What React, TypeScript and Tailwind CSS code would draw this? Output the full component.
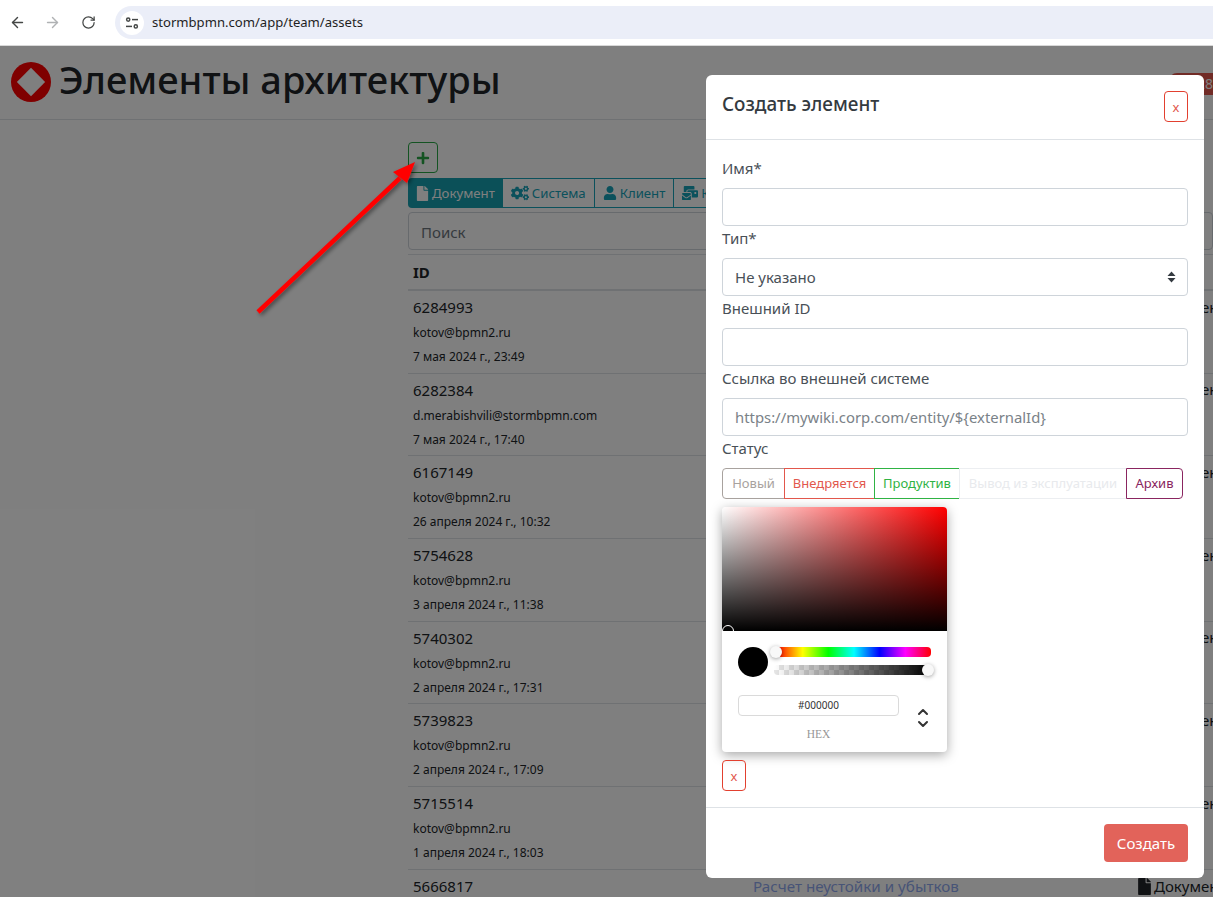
import { ArrowLeft, ArrowRight, RotateCw, ChevronUp, ChevronDown } from "lucide-react";
import { FaFile, FaCogs, FaUser, FaMailBulk, FaPlus } from "react-icons/fa";

const rows = [
  { id: "6284993", user: "kotov@bpmn2.ru", date: "7 мая 2024 г., 23:49" },
  { id: "6282384", user: "d.merabishvili@stormbpmn.com", date: "7 мая 2024 г., 17:40" },
  { id: "6167149", user: "kotov@bpmn2.ru", date: "26 апреля 2024 г., 10:32" },
  { id: "5754628", user: "kotov@bpmn2.ru", date: "3 апреля 2024 г., 11:38" },
  { id: "5740302", user: "kotov@bpmn2.ru", date: "2 апреля 2024 г., 17:31" },
  { id: "5739823", user: "kotov@bpmn2.ru", date: "2 апреля 2024 г., 17:09" },
  { id: "5715514", user: "kotov@bpmn2.ru", date: "1 апреля 2024 г., 18:03" },
];

function BrowserBar() {
  return (
    <div className="flex h-[46px] shrink-0 items-start border-b border-[#d8d8d8] bg-white">
      <div className="flex h-[45px] items-center">
        <ArrowLeft size={17} strokeWidth={2} className="ml-[9px] text-[#444746]" />
        <ArrowRight size={17} strokeWidth={2} className="ml-[18px] text-[#b0b2b4]" />
        <RotateCw size={15} strokeWidth={2} className="ml-[20px] text-[#444746]" />
      </div>
      <div className="ml-[19px] mt-[6px] flex h-[33px] flex-1 items-center rounded-l-full bg-[#ebeef8] pl-[5px]">
        <div className="flex h-[24px] w-[24px] items-center justify-center rounded-full bg-white">
          <svg width="14" height="14" viewBox="0 0 14 14" fill="none" stroke="#444746" strokeWidth="1.5">
            <circle cx="3.2" cy="3.6" r="1.6" />
            <path d="M7 3.6h6" />
            <path d="M1 10.4h6" />
            <circle cx="10.8" cy="10.4" r="1.6" />
          </svg>
        </div>
        <span className="ml-[8px] text-[13.1px] text-[#1f1f1f]">stormbpmn.com/app/team/assets</span>
      </div>
    </div>
  );
}

function Tab({ icon, label, active }: { icon: React.ReactNode; label: string; active?: boolean }) {
  return (
    <div
      className={
        active
          ? "flex h-[30px] items-center gap-[3px] rounded-l bg-[#16a0b0] px-[8px] text-white"
          : "flex h-[30px] items-center gap-[3px] border border-l-0 border-[#17a2b8] px-[8px] text-[#17a2b8]"
      }
    >
      {icon}
      <span className="mt-[1px] text-[13.2px]">{label}</span>
    </div>
  );
}

function DocType() {
  return (
    <span className="flex h-[24px] items-center gap-[3px] text-[15px] text-[#212529]">
      <FaFile className="h-[17px] w-[13px]" />
      Документ
    </span>
  );
}

function AssetRow({ id, user, date }: { id: string; user: string; date: string }) {
  return (
    <div className="grid h-[82.67px] grid-cols-[340px_385px_1fr] border-b border-[#dee2e6] pl-[5px] pt-[4px] text-[#212529]">
      <div className="flex flex-col">
        <span className="h-[26px] text-[15px] leading-[24px]">{id}</span>
        <span className="h-[24px] text-[12px] leading-[24px]">{user}</span>
        <span className="h-[24px] text-[12px] leading-[24px]">{date}</span>
      </div>
      <span />
      <DocType />
    </div>
  );
}

function Page() {
  return (
    <div className="flex-1 overflow-hidden bg-white">
      <div className="flex h-[74px] items-start justify-between border-b border-[#dee2e6] pl-[11px]">
        <div className="flex items-start gap-[8px] pt-[16px]">
          <div className="flex h-[40px] w-[40px] items-center justify-center rounded-full bg-[#ff0000]">
            <div className="h-[20px] w-[20px] rotate-45 bg-white" />
          </div>
          <h1 className="-mt-[3px] text-[38px] leading-[40px] font-medium text-[#212529]">Элементы архитектуры</h1>
        </div>
        <span className="mt-[27px] rounded-l-lg bg-[#e2574c] pl-[28px] text-[14px] leading-[22px] text-white">
          28
        </span>
      </div>
      <div className="pl-[408px] pt-[22px]">
        <div className="flex h-[31px] w-[30px] items-center justify-center rounded border border-[#28a745] text-[#28a745]">
          <FaPlus size={14} />
        </div>
        <div className="mt-[5px] flex">
          <Tab active icon={<FaFile className="h-[15px] w-[13px]" />} label="Документ" />
          <Tab icon={<FaCogs size={18} />} label="Система" />
          <Tab icon={<FaUser size={14} />} label="Клиент" />
          <Tab icon={<FaMailBulk size={16} />} label="Контрагент" />
        </div>
        <div className="mt-[4px] flex h-[38px] items-center rounded border border-[#ced4da] px-[12px] pt-[2px] text-[15px] text-[#6c757d]">
          Поиск
        </div>
        <div className="mt-[4px] h-[37px] border-t border-b-2 border-[#dee2e6] pl-[5px] text-[15px] leading-[35px] font-bold text-[#212529]">
          ID
        </div>
        {rows.map((r) => (
          <AssetRow key={r.id} {...r} />
        ))}
        <div className="grid grid-cols-[340px_385px_1fr] pl-[5px] pt-[5px] text-[15px] text-[#212529]">
          <span>5666817</span>
          <span className="text-[15.2px] text-[#8fa8ee]">Расчет неустойки и убытков</span>
          <DocType />
        </div>
      </div>
    </div>
  );
}

function Field({ label, children }: { label: string; children: React.ReactNode }) {
  return (
    <div>
      <div className="mb-2 text-[15px] leading-[24px] text-[#495057]">{label}</div>
      {children}
    </div>
  );
}

function Input({ text, placeholder }: { text?: string; placeholder?: string }) {
  return (
    <div className="flex h-[38px] items-center rounded border border-[#ced4da] px-[12px] text-[15px] text-[#495057]">
      {text}
      {placeholder && <span className="text-[14.85px] text-[#7a8288]">{placeholder}</span>}
    </div>
  );
}

function ColorPicker() {
  return (
    <div className="mt-2 h-[245px] w-[225px] rounded-sm bg-white shadow-[0_3px_12px_rgba(0,0,0,0.35)]">
      <div className="relative h-[124px] overflow-hidden rounded-t-sm bg-[linear-gradient(to_top,#000,transparent),linear-gradient(to_right,#fff,#f00)]">
        <div className="absolute bottom-[-6px] left-0 h-[12px] w-[12px] rounded-full border border-white" />
      </div>
      <div className="px-[16px] pt-[16px]">
        <div className="flex gap-[6px]">
          <div className="h-[30px] w-[30px] rounded-full bg-black" />
          <div className="flex-1">
            <div className="relative ml-[3px] h-[10px] rounded-sm bg-[linear-gradient(to_right,#f00,#ff0,#0f0,#0ff,#00f,#f0f,#f00)]">
              <div className="absolute left-[-7px] top-[-1px] h-[12px] w-[12px] rounded-full bg-[#f8f8f8] shadow-[0_1px_4px_rgba(0,0,0,0.37)]" />
            </div>
            <div className="relative mt-[8px] h-[10px] rounded-sm bg-[linear-gradient(to_right,transparent,#000),repeating-conic-gradient(#e6e6e6_0_25%,#fff_0_50%)] bg-[length:100%_100%,10px_10px]">
              <div className="absolute right-[-3px] top-[-1px] h-[12px] w-[12px] rounded-full bg-[#f8f8f8] shadow-[0_1px_4px_rgba(0,0,0,0.37)]" />
            </div>
          </div>
        </div>
        <div className="mt-[18px] flex">
          <div className="w-[161px]">
            <div className="flex h-[21px] items-center justify-center rounded-sm border border-[#dadada] text-[10px] text-[#333]">
              #000000
            </div>
            <div className="mt-[10px] text-center font-['Liberation_Serif',serif] text-[11.5px] text-[#969696]">HEX</div>
          </div>
          <div className="ml-[16px] mt-[9px] flex flex-col text-[#333]">
            <ChevronUp size={16} strokeWidth={3} className="-mb-[4px]" />
            <ChevronDown size={16} strokeWidth={3} />
          </div>
        </div>
      </div>
    </div>
  );
}

function CloseButton() {
  return (
    <div className="flex h-[31px] w-[24px] items-center justify-center rounded-sm border border-[#e2402f] pt-[2px] text-[13px] text-[#e2574c]">
      x
    </div>
  );
}

function Modal() {
  const statusBase = "-ml-px flex h-[31px] items-center justify-center border text-[13px]";
  return (
    <div className="absolute left-[706px] top-[75px] w-[498px] rounded-md bg-white">
      <div className="flex h-[65px] items-start justify-between border-b border-[#dee2e6] px-[16px] pt-[16px]">
        <h2 className="text-[18.9px] leading-[27px] font-medium text-[#343a40]">Создать элемент</h2>
        <CloseButton />
      </div>
      <div className="px-[16px] pb-[16px] pt-[16px]">
        <Field label="Имя*">
          <Input />
        </Field>
        <Field label="Тип*">
          <div className="relative">
            <Input text="Не указано" />
            <svg className="absolute right-[12px] top-[13px]" width="9" height="12" viewBox="0 0 9 12" fill="#343a40">
              <path d="M4.5 0.5 8.5 5H0.5z" />
              <path d="M4.5 11.5 0.5 7h8z" />
            </svg>
          </div>
        </Field>
        <Field label="Внешний ID">
          <Input />
        </Field>
        <Field label="Ссылка во внешней системе">
          <Input placeholder="https://mywiki.corp.com/entity/${externalId}" />
        </Field>
        <div className="text-[15px] leading-[24px] text-[#495057]">Статус</div>
        <div className="mt-2 flex pl-px">
          <div className={`${statusBase} w-[63px] rounded-l border-[#a8a29e] text-[#a8a29e]`}>Новый</div>
          <div className={`${statusBase} w-[91px] border-[#e2574c] text-[#e2574c]`}>Внедряется</div>
          <div className={`${statusBase} w-[86px] border-[#2fb344] text-[#2fb344]`}>Продуктив</div>
          <div className={`${statusBase} w-[168px] border-[#eceef1] text-[#e8eaed]`}>Вывод из эксплуатации</div>
          <div className={`${statusBase} w-[57px] rounded-r border-[#8a2560] text-[#8a2560]`}>Архив</div>
        </div>
        <ColorPicker />
        <div className="mt-2">
          <CloseButton />
        </div>
      </div>
      <div className="flex justify-end border-t border-[#dee2e6] p-[16px]">
        <div className="flex h-[38px] w-[84px] items-center justify-center rounded bg-[#e2635a] text-[15px] text-white">
          Создать
        </div>
      </div>
    </div>
  );
}

export default function App() {
  return (
    <div className="relative flex h-[897px] w-[1213px] flex-col overflow-hidden font-['Noto_Sans',sans-serif]">
      <BrowserBar />
      <Page />
      <div className="absolute inset-x-0 bottom-0 top-[46px] bg-black/50" />
      <Modal />
      <svg className="absolute left-[250px] top-[155px]" width="180" height="165" viewBox="0 0 180 165">
        <defs>
          <filter id="arrowShadow" x="-20%" y="-20%" width="140%" height="140%">
            <feDropShadow dx="2" dy="2" stdDeviation="2" floodColor="#000" floodOpacity="0.45" />
          </filter>
        </defs>
        <g filter="url(#arrowShadow)">
          <path d="M8 157 L150 23" stroke="#ff0000" strokeWidth="4.5" fill="none" />
          <path d="M165 7 L143 17 L157 28 Z" fill="#ff0000" />
        </g>
      </svg>
    </div>
  );
}
